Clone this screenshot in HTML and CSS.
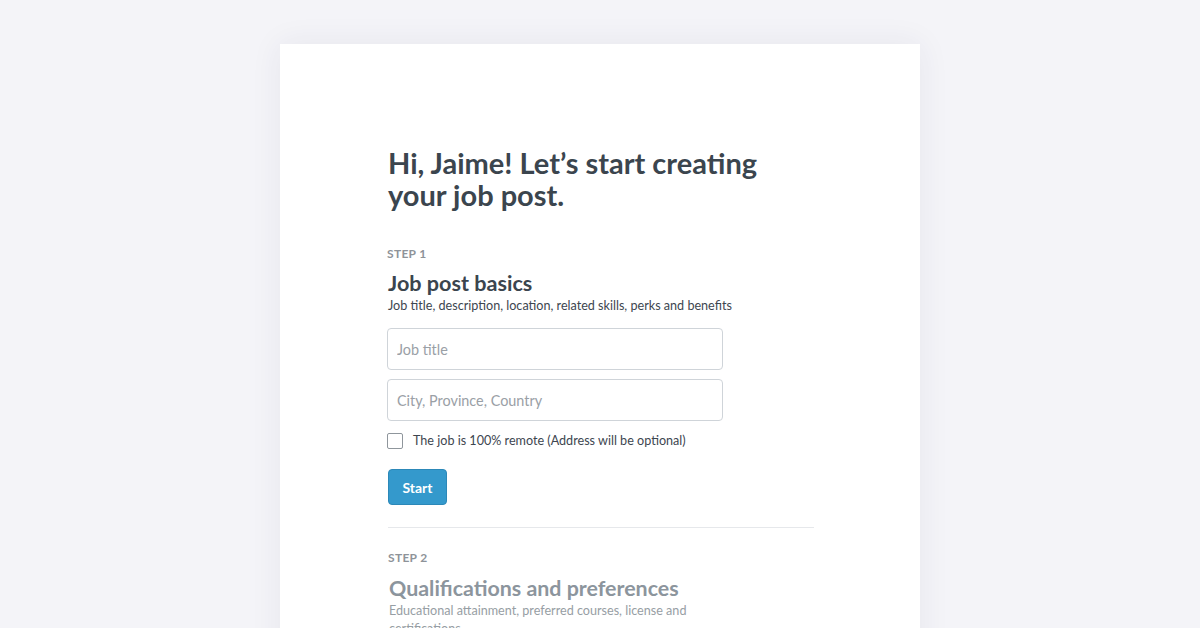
FILE: index.html
```html
<!DOCTYPE html>
<html lang="en">
<head>
<meta charset="utf-8">
<title>Create job post</title>
<link rel="stylesheet" href="styles.css">
</head>
<body>
<main class="card">
  <div class="content">
    <h1 class="title">Hi, Jaime! Let’s start creating your job post.</h1>

    <section class="step">
      <div class="step-label">STEP 1</div>
      <h2 class="step-title">Job post basics</h2>
      <p class="step-desc">Job title, description, location, related skills, perks and benefits</p>
      <form class="form">
        <input class="field" type="text" placeholder="Job title">
        <input class="field" type="text" placeholder="City, Province, Country">
        <label class="check">
          <span class="box"></span>
          <span class="check-text">The job is 100% remote (Address will be optional)</span>
        </label>
        <button class="btn" type="button">Start</button>
      </form>
    </section>

    <hr class="divider">

    <section class="step step-muted">
      <div class="step-label">STEP 2</div>
      <h2 class="step-title">Qualifications and preferences</h2>
      <p class="step-desc narrow">Educational attainment, preferred courses, license and certifications</p>
    </section>
  </div>
</main>
</body>
</html>
```

FILE: styles.css
```css
* { box-sizing: border-box; }
html, body { margin: 0; padding: 0; }
body {
  background: #f4f4f8;
  font-family: Lato, "Noto Sans", sans-serif;
  color: #3c464f;
  overflow: hidden;
  height: 628px;
}
.card {
  width: 640px;
  margin: 44px auto 0;
  min-height: 700px;
  background: #ffffff;
  box-shadow: 0 0 30px rgba(40, 40, 90, 0.07);
}
.content {
  padding: 103px 0 0 108px;
  width: 534px;
}
.title {
  margin: 0;
  max-width: 400px;
  font-size: 29px;
  line-height: 32px;
  font-weight: 700;
  color: #3b454e;
}
.step { margin-top: 35px; }
.step-label {
  font-size: 12px;
  line-height: 16px;
  font-weight: 700;
  letter-spacing: 0.3px;
  color: #8e9399;
  margin-left: -1px;
}
.step-title {
  margin: 8px 0 0;
  font-size: 21.6px;
  line-height: 26px;
  font-weight: 700;
  color: #3b454e;
}
.step-desc {
  margin: 1px 0 0;
  font-size: 12.6px;
  line-height: 18px;
  color: #3d4650;
}
.form {
  display: flex;
  flex-direction: column;
  align-items: flex-start;
  margin-top: 13px;
}
.field {
  width: 336px;
  height: 42px;
  margin: 0 0 9px -1px;
  padding: 0 9px;
  border: 1px solid #cfd4d9;
  border-radius: 4px;
  font-family: inherit;
  font-size: 14.4px;
  color: #3d4650;
  background: #fff;
  outline: none;
}
.field::placeholder { color: #9aa0a6; }
.check {
  display: flex;
  align-items: center;
  gap: 10px;
  margin: 3px 0 0 -1px;
}
.box {
  width: 16px;
  height: 16px;
  border: 1px solid #8f969c;
  border-radius: 2px;
  background: #fff;
}
.check-text {
  font-size: 12.6px;
  line-height: 16px;
  color: #3d4650;
}
.btn {
  margin-top: 20px;
  width: 59px;
  height: 36px;
  border: 1px solid #2c88b8;
  border-radius: 4px;
  background: #3499cc;
  color: #fff;
  font-family: inherit;
  font-size: 14px;
  font-weight: 700;
  padding: 0;
}
.divider {
  margin: 22px 0 0;
  width: 426px;
  border: 0;
  border-top: 1px solid #e6e8eb;
  height: 0;
}
.step-muted { margin-top: 22px; padding-left: 1px; }
.step-muted .step-title {
  margin-top: 9px;
  font-size: 21.4px;
  color: #8c959d;
}
.step-muted .step-desc { color: #979ea4; }
.narrow { max-width: 310px; }
```
